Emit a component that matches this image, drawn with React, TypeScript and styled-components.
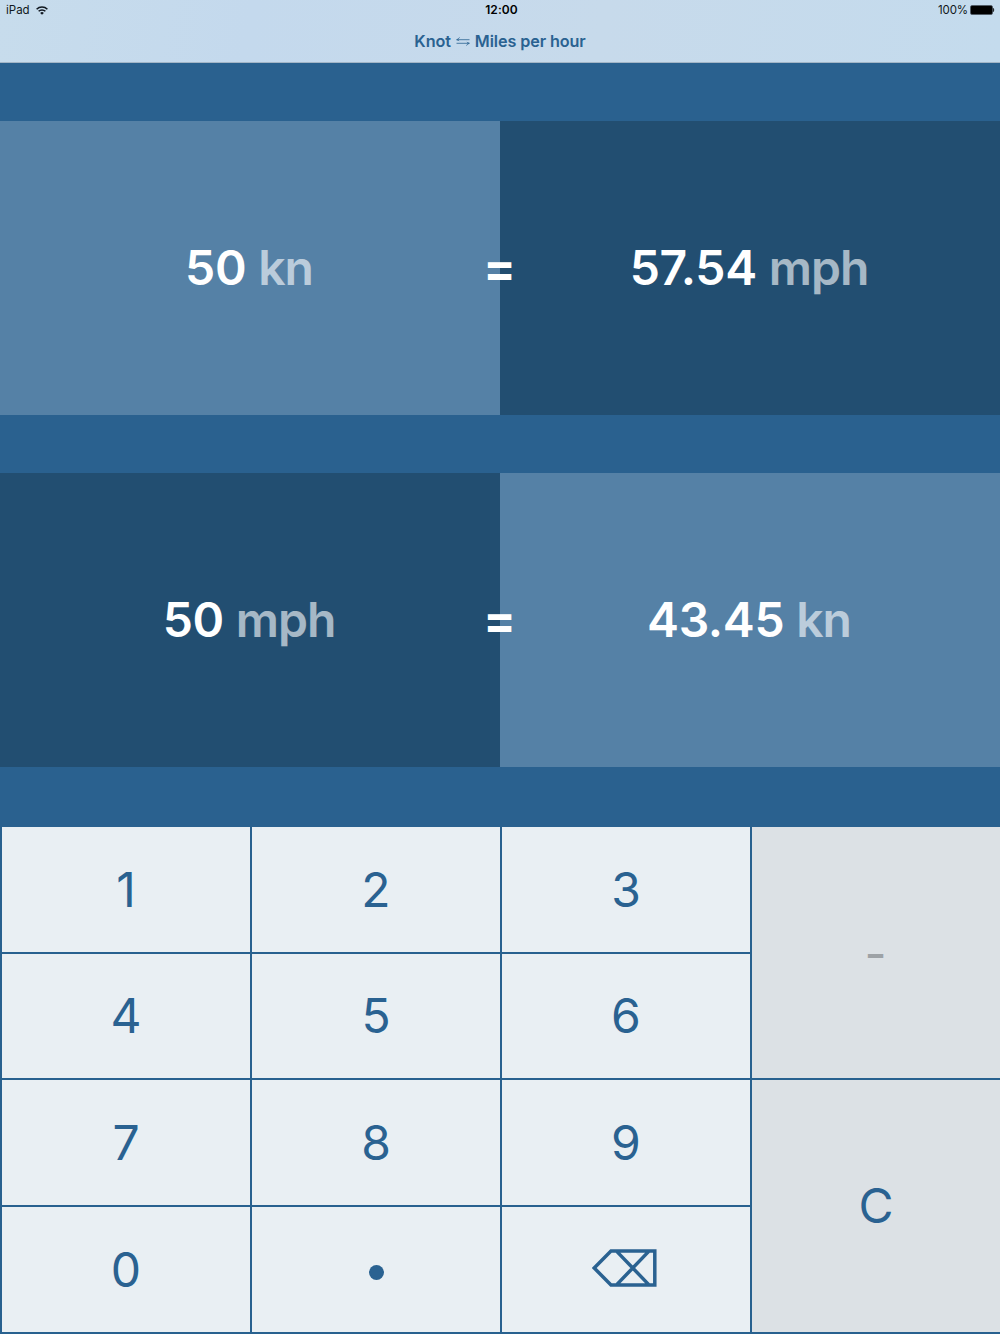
import React from "react";
import styled, { createGlobalStyle } from "styled-components";

const blue = "#2a6291";

const GlobalStyle = createGlobalStyle`
  html, body { margin: 0; padding: 0; background: #2a618f; }
  *, *::before, *::after { box-sizing: border-box; }
  body { font-family: Inter, "Liberation Sans", sans-serif; }
`;

const Screen = styled.main`
  width: 1000px;
  height: 1334px;
  display: flex;
  flex-direction: column;
  overflow: hidden;
  background: #2a618f;
`;

const Header = styled.header`
  height: 63px;
  flex: none;
  background: linear-gradient(100deg, #c7dcec 0%, #c4d9ed 25%, #c7daeb 60%, #c4dbed 100%);
  border-bottom: 1px solid #a3b6c7;
`;

const StatusBar = styled.div`
  height: 20px;
  display: grid;
  grid-template-columns: 1fr auto 1fr;
  align-items: center;
  color: #111820;
  padding: 0 5px 0 6px;
  font-size: 11.5px;
  line-height: 20px;
`;

const Carrier = styled.div`
  display: flex;
  align-items: center;
  gap: 6px;
`;

const Clock = styled.div`
  font-weight: 600;
  font-size: 12px;
  letter-spacing: 0.1px;
  color: #000;
  padding-left: 2px;
`;

const Battery = styled.div`
  display: flex;
  align-items: center;
  justify-content: flex-end;
  gap: 2px;
  letter-spacing: -0.1px;
`;

const Title = styled.h1`
  margin: 0;
  height: 42px;
  display: flex;
  align-items: center;
  justify-content: center;
  gap: 5px;
  color: ${blue};
  font-size: 16.2px;
  font-weight: 600;
  letter-spacing: -0.1px;
`;

const Conversions = styled.section`
  height: 764px;
  flex: none;
  display: flex;
  flex-direction: column;
  gap: 58px;
  padding-top: 58px;
`;

const Conversion = styled.div`
  height: 294px;
  position: relative;
  display: grid;
  grid-template-columns: 1fr 1fr;
`;

const Panel = styled.div<{ $dark?: boolean }>`
  display: flex;
  align-items: center;
  justify-content: center;
  padding: 0 2px 1px 0;
  background: ${(p) => (p.$dark ? "#224e71" : "#5581a6")};
  color: #fff;
  font-size: 48px;
  font-weight: 600;
  white-space: pre;
`;

const Amount = styled.span`
  letter-spacing: -0.35px;
`;

const Unit = styled.span`
  margin-left: 12px;
  letter-spacing: -1px;
  opacity: 0.6;
`;

const EqualSign = styled.span`
  position: absolute;
  inset: 0;
  display: flex;
  align-items: center;
  justify-content: center;
  color: #fff;
  font-size: 48px;
  font-weight: 700;
  padding: 0 1px 1px 0;
`;

const Keypad = styled.section`
  flex: 1;
  display: grid;
  grid-template-columns: repeat(4, 248px);
  grid-template-rows: 125px 124px 125px 125px;
  gap: 2px;
  padding-left: 2px;
  background: #28618f;
`;

const Key = styled.button<{ $side?: boolean; $muted?: boolean; $area: string }>`
  grid-area: ${(p) => p.$area};
  display: flex;
  align-items: center;
  justify-content: center;
  margin: 0;
  padding: ${(p) => (p.$muted ? "2px 1px 0 0" : "0")};
  border: 0;
  background: ${(p) => (p.$side ? "#dce1e5" : "#e9eff3")};
  color: ${(p) => (p.$muted ? "#9da2a6" : blue)};
  font-family: inherit;
  font-size: 48px;
  font-weight: 400;
  line-height: 60px;
`;

const WifiIcon = () => (
  <svg width="12" height="9" viewBox="0 0 12 9">
    <path d="M0.6 3.2A7.6 7.6 0 0 1 11.4 3.2M2.6 5.3A4.8 4.8 0 0 1 9.4 5.3" fill="none" stroke="#111820" strokeWidth="1.5" />
    <path d="M4.1 6.9A2.9 2.9 0 0 1 7.9 6.9L6 8.8Z" fill="#111820" />
  </svg>
);

const BatteryIcon = () => (
  <svg width="25" height="10" viewBox="0 0 25 10">
    <rect x="0.5" y="0.5" width="22" height="9" rx="1.5" fill="#000" stroke="#4a5560" strokeWidth="0.7" />
    <path d="M23.2 3.2Q24.6 5 23.2 6.8Z" fill="#000" stroke="#000" strokeWidth="0.5" />
  </svg>
);

const SwapIcon = () => (
  <svg width="14" height="9" viewBox="0 0 14 9" fill="none" stroke={blue} strokeWidth="0.8">
    <path d="M13.5 2.7H0.7M3.5 0.4Q2.7 2.1 0.7 2.7Q2.7 3.3 3.1 4M0.5 6.3H13.3M10.5 8.6Q11.3 6.9 13.3 6.3Q11.3 5.7 10.9 5" />
  </svg>
);

const BackspaceGlyph = styled.svg`
  margin: 0 3px 3px 0;
`;

const BackspaceIcon = () => (
  <BackspaceGlyph width="66" height="38" viewBox="0 0 66 38" fill="none" stroke={blue} strokeWidth="3.5">
    <path d="M2.2 19L19 2.1H62.8V35.9H19ZM24.5 2.1L57 35.9M57 2.1L24.5 35.9" />
  </BackspaceGlyph>
);

const Dot = styled.span`
  width: 15px;
  height: 15px;
  margin-top: 5px;
  border-radius: 50%;
  background: ${blue};
`;

const digits = ["1", "2", "3", "4", "5", "6", "7", "8", "9", "0"];

interface PanelData {
  amount: string;
  unit: string;
  dark?: boolean;
}

const rows: PanelData[][] = [
  [
    { amount: "50", unit: "kn" },
    { amount: "57.54", unit: "mph", dark: true },
  ],
  [
    { amount: "50", unit: "mph", dark: true },
    { amount: "43.45", unit: "kn" },
  ],
];

export default function App() {
  return (
    <>
      <GlobalStyle />
      <Screen>
        <Header>
          <StatusBar>
            <Carrier>iPad <WifiIcon /></Carrier>
            <Clock>12:00</Clock>
            <Battery>100% <BatteryIcon /></Battery>
          </StatusBar>
          <Title><span>Knot</span><SwapIcon /><span>Miles per hour</span></Title>
        </Header>
        <Conversions>
          {rows.map((row, i) => (
            <Conversion key={i}>
              {row.map((p) => (
                <Panel key={p.unit} $dark={p.dark}>
                  <Amount>{p.amount}</Amount>
                  <Unit>{p.unit}</Unit>
                </Panel>
              ))}
              <EqualSign>=</EqualSign>
            </Conversion>
          ))}
        </Conversions>
        <Keypad>
          {digits.map((d, i) => (
            <Key key={d} $area={d === "0" ? "4 / 1" : `${Math.floor(i / 3) + 1} / ${(i % 3) + 1}`}>{d}</Key>
          ))}
          <Key $area="4 / 2" aria-label="Decimal point"><Dot /></Key>
          <Key $area="4 / 3" aria-label="Delete"><BackspaceIcon /></Key>
          <Key $area="1 / 4 / 3 / 5" $side $muted>-</Key>
          <Key $area="3 / 4 / 5 / 5" $side>C</Key>
        </Keypad>
      </Screen>
    </>
  );
}
